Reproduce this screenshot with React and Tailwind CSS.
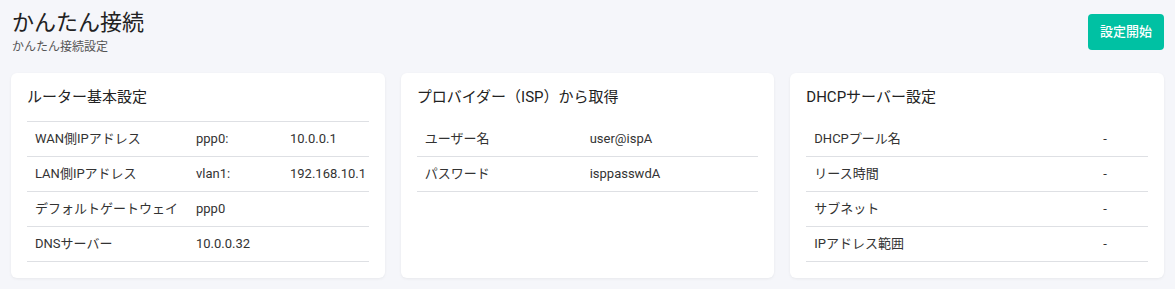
const font = { fontFamily: 'Roboto, "Noto Sans CJK JP", sans-serif' }

const router = [
  ['WAN側IPアドレス', 'ppp0:', '10.0.0.1'],
  ['LAN側IPアドレス', 'vlan1:', '192.168.10.1'],
  ['デフォルトゲートウェイ', 'ppp0', ''],
  ['DNSサーバー', '10.0.0.32', ''],
]

const isp = [
  ['ユーザー名', 'user@ispA'],
  ['パスワード', 'isppasswdA'],
]

const dhcp = [
  ['DHCPプール名', '-'],
  ['リース時間', '-'],
  ['サブネット', '-'],
  ['IPアドレス範囲', '-'],
]

function Card({ title, children }) {
  return (
    <div className="bg-white rounded-md shadow-[0_1px_3px_rgba(0,0,0,0.06)] px-4 pt-[13px] pb-[17px] h-[205px]">
      <h2 className="text-[15px] leading-[22px] text-[#222] mb-[13px]">{title}</h2>
      {children}
    </div>
  )
}

export default function App() {
  return (
    <div className="w-[1175px] h-[289px] bg-[#f5f6fa] px-[11px] text-[#333]" style={font}>
      <div className="flex justify-between items-start pt-[14px] h-[73px]">
        <div className="-mt-[5px]">
          <h1 className="text-[22px] leading-[28px] text-[#222] pl-px">かんたん接続</h1>
          <p className="text-[12px] leading-[18px] text-[#555] pl-px mt-[1px]">かんたん接続設定</p>
        </div>
        <button className="bg-[#00c1a3] text-white text-[13px] font-medium rounded-[4px] w-[76px] h-[36px]">
          設定開始
        </button>
      </div>
      <div className="grid grid-cols-3 gap-4">
        <Card title="ルーター基本設定">
          <table className="w-full table-fixed text-[13px] border-t border-[#dee0e4]">
            <colgroup>
              <col className="w-[161px]" />
              <col className="w-[94px]" />
              <col />
            </colgroup>
            <tbody>
              {router.map(r => (
                <tr key={r[0]} className="border-b border-[#dee0e4] h-[35px]">
                  <td className="px-2 whitespace-nowrap">{r[0]}</td>
                  <td className="px-2 whitespace-nowrap">{r[1]}</td>
                  <td className="px-2 whitespace-nowrap">{r[2]}</td>
                </tr>
              ))}
            </tbody>
          </table>
        </Card>
        <Card title="プロバイダー（ISP）から取得">
          <table className="w-full table-fixed text-[13px]">
            <colgroup>
              <col className="w-[165px]" />
              <col />
            </colgroup>
            <tbody>
              {isp.map(r => (
                <tr key={r[0]} className="border-b border-[#dee0e4] h-[35px]">
                  <td className="px-2">{r[0]}</td>
                  <td className="px-2">{r[1]}</td>
                </tr>
              ))}
            </tbody>
          </table>
        </Card>
        <Card title="DHCPサーバー設定">
          <table className="w-full table-fixed text-[13px]">
            <colgroup>
              <col className="w-[289px]" />
              <col />
            </colgroup>
            <tbody>
              {dhcp.map(r => (
                <tr key={r[0]} className="border-b border-[#dee0e4] h-[35px]">
                  <td className="px-2">{r[0]}</td>
                  <td className="px-2">{r[1]}</td>
                </tr>
              ))}
            </tbody>
          </table>
        </Card>
      </div>
    </div>
  )
}
